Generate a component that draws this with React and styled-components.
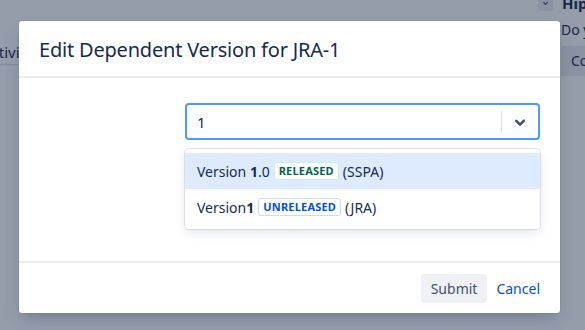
import styled, { createGlobalStyle } from 'styled-components';

const GlobalStyle = createGlobalStyle`
  html, body {
    margin: 0;
    padding: 0;
    width: 585px;
    height: 330px;
    overflow: hidden;
    font-family: "Noto Sans", "Liberation Sans", sans-serif;
  }
`;

const Page = styled.div`
  position: relative;
  width: 585px;
  height: 330px;
  background: #ffffff;
  display: flex;
  justify-content: space-between;
  overflow: hidden;
`;

const LeftPane = styled.div`
  width: 90px;
  margin-left: -19px;
  padding-top: 42px;
`;

const Tab = styled.div`
  white-space: nowrap;
  font-size: 15px;
  color: #172b4d;
  height: 22px;
  padding-left: 1px;
  border-bottom: 1px solid #dfe1e6;
`;

const RightPane = styled.div`
  width: 24px;
  display: flex;
  flex-direction: column;
  white-space: nowrap;
`;

const PanelHead = styled.div`
  display: flex;
  align-items: center;
  gap: 9px;
  height: 14px;
  margin-top: -4px;
  margin-left: -23px;
  font-weight: 700;
  font-size: 15px;
  color: #172b4d;
`;

const ToggleBtn = styled.span`
  width: 15px;
  height: 16px;
  border-radius: 3px;
  background: #ebecf0;
  display: flex;
  align-items: center;
  justify-content: center;
  color: #42526e;
`;

const PanelText = styled.div`
  margin-top: 10px;
  font-size: 14px;
  color: #172b4d;
`;

const PanelBox = styled.div`
  margin-top: 7px;
  height: 30px;
  padding-left: 10px;
  background: #ebecf0;
  font-size: 14px;
  line-height: 30px;
  color: #172b4d;
`;

const Blanket = styled.div`
  position: absolute;
  inset: 0;
  background: rgba(19, 37, 68, 0.45);
`;

const Modal = styled.div`
  position: absolute;
  left: 19px;
  top: 21px;
  width: 541px;
  height: 292px;
  background: #ffffff;
  border-radius: 3px;
  box-shadow: 0 8px 16px -4px rgba(9, 30, 66, 0.25), 0 0 1px rgba(9, 30, 66, 0.31);
  display: flex;
  flex-direction: column;
`;

const Header = styled.div`
  padding: 17px 20px 0;
  height: 38px;
  border-bottom: 2px solid #ebecf0;
`;

const Title = styled.h2`
  margin: 0;
  font-size: 20px;
  font-weight: 400;
  line-height: 24px;
  color: #172b4d;
  letter-spacing: -0.2px;
`;

const Body = styled.div`
  flex: 1;
  display: grid;
  grid-template-columns: 146px 1fr;
  align-content: start;
  padding: 25px 20px 0;
  border-bottom: 2px solid #ebecf0;
`;

const Field = styled.div`
  grid-column: 2;
  position: relative;
`;

const Control = styled.div`
  height: 33px;
  border: 2px solid #4c9aff;
  border-radius: 4px;
  display: flex;
  align-items: center;
  padding-left: 10px;
`;

const Value = styled.div`
  flex: 1;
  font-size: 15px;
  color: #172b4d;
`;

const Separator = styled.span`
  width: 1px;
  height: 21px;
  background: #dfe1e6;
`;

const Indicator = styled.div`
  width: 36px;
  display: flex;
  align-items: center;
  justify-content: center;
  color: #42526e;
`;

const Menu = styled.div`
  position: absolute;
  top: 46px;
  left: 0;
  right: 0;
  padding: 4px 0;
  background: #ffffff;
  border-radius: 4px;
  box-shadow: 0 0 0 1px rgba(9, 30, 66, 0.1), 0 4px 11px rgba(9, 30, 66, 0.1);
`;

const Option = styled.div`
  height: 36px;
  padding-left: 12px;
  display: flex;
  align-items: center;
  gap: 4px;
  font-size: 14px;
  color: #172b4d;
  background: ${p => (p.$active ? '#deebff' : 'transparent')};
`;

const Bold = styled.b`
  font-weight: 700;
`;

const Lozenge = styled.span`
  display: inline-block;
  padding: 0 4px;
  height: 16px;
  line-height: 16px;
  border-radius: 3px;
  border: 1px solid ${p => (p.$tone === 'green' ? '#c3f3dc' : '#c5dcff')};
  background: #ffffff;
  color: ${p => (p.$tone === 'green' ? '#006644' : '#0052cc')};
  font-size: 11px;
  font-weight: 700;
  letter-spacing: 0.2px;
  text-transform: uppercase;
`;

const Footer = styled.div`
  height: 50px;
  padding: 0 20px;
  display: flex;
  align-items: center;
  justify-content: flex-end;
  gap: 9px;
`;

const Button = styled.button`
  height: 29px;
  padding: 0 10px;
  border: none;
  border-radius: 3px;
  background: #f0f1f4;
  color: #42526e;
  font-family: inherit;
  font-size: 14px;
`;

const LinkButton = styled.a`
  color: #0052cc;
  font-size: 14px;
  text-decoration: none;
`;

const Chevron = ({ size = 20 }) => (
  <svg width={size} height={size} viewBox="0 0 24 24">
    <path d="M8.3 10.3a1 1 0 0 1 1.4 0L12 12.6l2.3-2.3a1 1 0 1 1 1.4 1.4l-3 3a1 1 0 0 1-1.4 0l-3-3a1 1 0 0 1 0-1.4z" fill="currentColor" />
  </svg>
);

export default function App() {
  return (
    <>
      <GlobalStyle />
      <Page>
        <LeftPane>
          <Tab>Activity</Tab>
        </LeftPane>
        <RightPane>
          <PanelHead>
            <ToggleBtn><Chevron size={18} /></ToggleBtn>
            Hipchat
          </PanelHead>
          <PanelText>Do you</PanelText>
          <PanelBox>Connect</PanelBox>
        </RightPane>
        <Blanket />
        <Modal>
          <Header>
            <Title>Edit Dependent Version for JRA-1</Title>
          </Header>
          <Body>
            <Field>
              <Control>
                <Value>1</Value>
                <Separator />
                <Indicator><Chevron size={30} /></Indicator>
              </Control>
              <Menu>
                <Option $active>
                  <span>Version <Bold>1</Bold>.0</span>
                  <Lozenge $tone="green">Released</Lozenge>
                  <span>(SSPA)</span>
                </Option>
                <Option>
                  <span>Version<Bold>1</Bold></span>
                  <Lozenge $tone="blue">Unreleased</Lozenge>
                  <span>(JRA)</span>
                </Option>
              </Menu>
            </Field>
          </Body>
          <Footer>
            <Button>Submit</Button>
            <LinkButton href="#">Cancel</LinkButton>
          </Footer>
        </Modal>
      </Page>
    </>
  );
}
